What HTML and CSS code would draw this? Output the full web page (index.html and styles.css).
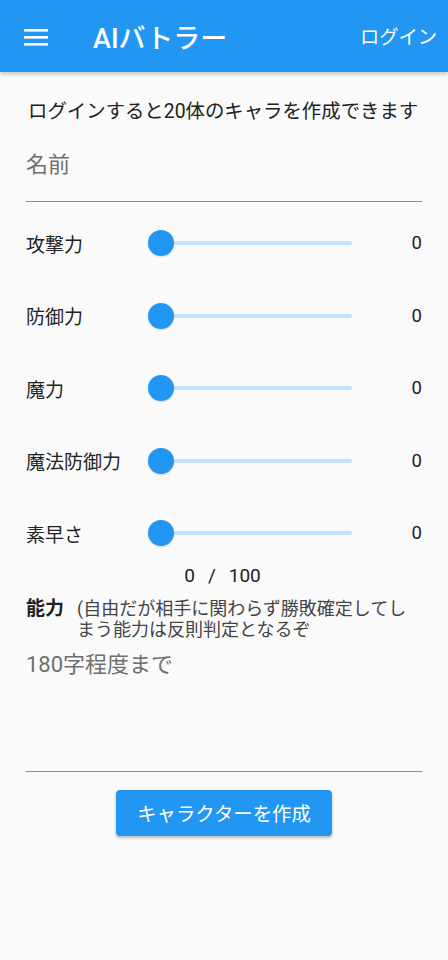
FILE: index.html
```html
<!DOCTYPE html>
<html lang="ja">
<head>
<meta charset="utf-8">
<title>AIバトラー</title>
<link rel="stylesheet" href="styles.css">
</head>
<body>
<header class="appbar">
  <div class="menu" aria-label="menu">
    <svg width="24" height="24" viewBox="0 0 24 24"><rect x="0" y="5" width="24" height="2.6" fill="#fff"/><rect x="0" y="12" width="24" height="2.6" fill="#fff"/><rect x="0" y="19" width="24" height="2.6" fill="#fff"/></svg>
  </div>
  <h1 class="title">AIバトラー</h1>
  <span class="login">ログイン</span>
</header>
<main class="content">
  <p class="intro">ログインすると20体のキャラを作成できます</p>
  <div class="field name-field"><span class="placeholder">名前</span></div>
  <div class="stats">
    <div class="stat"><span class="stat-label">攻撃力</span><div class="slider"><div class="track"></div><div class="thumb"></div></div><span class="stat-value">0</span></div>
    <div class="stat"><span class="stat-label">防御力</span><div class="slider"><div class="track"></div><div class="thumb"></div></div><span class="stat-value">0</span></div>
    <div class="stat"><span class="stat-label">魔力</span><div class="slider"><div class="track"></div><div class="thumb"></div></div><span class="stat-value">0</span></div>
    <div class="stat"><span class="stat-label">魔法防御力</span><div class="slider"><div class="track"></div><div class="thumb"></div></div><span class="stat-value">0</span></div>
    <div class="stat"><span class="stat-label">素早さ</span><div class="slider"><div class="track"></div><div class="thumb"></div></div><span class="stat-value">0</span></div>
  </div>
  <div class="total"><span>0</span><span>/</span><span>100</span></div>
  <div class="ability">
    <span class="ability-label">能力</span>
    <span class="ability-note">(自由だが相手に関わらず勝敗確定してしまう能力は反則判定となるぞ</span>
  </div>
  <div class="field ability-field"><span class="placeholder">180字程度まで</span></div>
  <div class="actions"><button class="create">キャラクターを作成</button></div>
</main>
</body>
</html>
```
FILE: styles.css
```css
* { box-sizing: border-box; }
html, body { margin: 0; padding: 0; }
body {
  background: #fafafa;
  font-family: Roboto, "Noto Sans CJK JP", sans-serif;
  color: #212121;
  width: 448px;
  height: 960px;
  overflow: hidden;
}
.appbar {
  height: 72px;
  background: #2196f3;
  display: flex;
  align-items: center;
  padding: 0 11px 0 24px;
  box-shadow: 0 2px 4px rgba(0,0,0,0.22);
  position: relative;
  z-index: 1;
}
.menu { width: 24px; height: 24px; display: flex; }
.title {
  margin: 0 0 0 45px;
  font-size: 27px;
  font-weight: 500;
  color: #fff;
  flex: 1;
}
.login { color: #fff; font-size: 19.3px; }
.content { padding: 0 26px; }
.intro {
  margin: 27px 0 0 2px;
  font-size: 19.4px;
  line-height: 26px;
  color: #212121;
  white-space: nowrap;
}
.field {
  border-bottom: 1px solid #8a8a8a;
}
.placeholder { color: #6f6f6f; font-size: 22px; }
.name-field {
  margin-top: 13px;
  height: 64px;
  padding-top: 13px;
  line-height: 28px;
}
.stats { display: flex; flex-direction: column; }
.stat {
  height: 72.5px;
  display: flex;
  align-items: center;
}
.stat:first-child { margin-top: 5px; }
.stat-label { width: 108px; font-size: 19px; color: #212121; }
.slider {
  position: relative;
  width: 242px;
  height: 30px;
  display: flex;
  align-items: center;
  padding: 0 24px 0 27px;
}
.track {
  flex: 1;
  height: 4px;
  border-radius: 2px;
  background: #c6e2fb;
}
.thumb {
  position: absolute;
  left: 14px;
  top: 2px;
  width: 26px;
  height: 26px;
  border-radius: 50%;
  background: #2196f3;
  box-shadow: 0 1px 2px rgba(0,0,0,0.15);
}
.stat-value { flex: 1; text-align: right; font-size: 18.5px; }
.total {
  margin-top: -7px;
  display: flex;
  justify-content: center;
  gap: 13px;
  font-size: 19px;
  line-height: 26px;
  padding-right: 3px;
}
.ability {
  margin-top: 9px;
  display: flex;
  line-height: 21px;
}
.ability-label { font-weight: 700; width: 51px; flex: none; font-size: 19px; }
.ability-note { color: #444; font-size: 18px; }
.ability-field {
  margin-top: 11px;
  height: 121px;
  line-height: 28px;
}
.actions { display: flex; justify-content: center; margin-top: 18px; }
.create {
  width: 216px;
  height: 46px;
  border: none;
  border-radius: 4px;
  background: #2196f3;
  color: #fff;
  font-family: Roboto, "Noto Sans CJK JP", sans-serif;
  font-size: 19.4px;
  box-shadow: 0 2px 3px rgba(0,0,0,0.25);
  padding: 0;
}
```
